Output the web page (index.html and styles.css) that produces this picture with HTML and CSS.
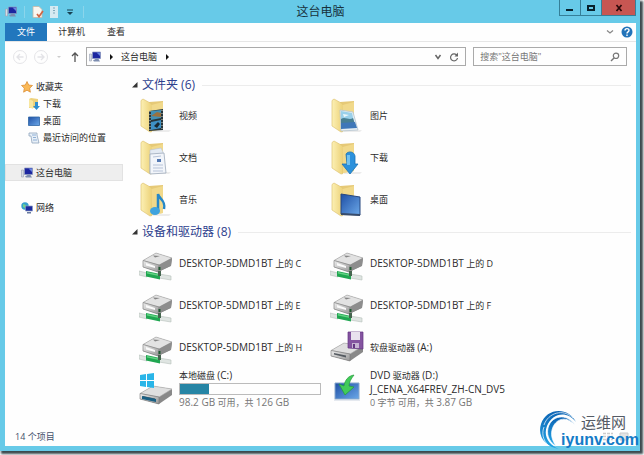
FILE: index.html
```html
<!DOCTYPE html>
<html lang="zh-CN">
<head>
<meta charset="utf-8">
<title>这台电脑</title>
<link rel="stylesheet" href="styles.css">
</head>
<body>
<svg class="defs" aria-hidden="true">
  <defs>
    <linearGradient id="fold" x1="0" x2="1"><stop offset="0" stop-color="#fcf0b4"/><stop offset="1" stop-color="#ecd177"/></linearGradient>
    <linearGradient id="metal" x1="0" y1="0" x2="1" y2="1"><stop offset="0" stop-color="#ededed"/><stop offset="1" stop-color="#979797"/></linearGradient>
    <linearGradient id="blue" x1="0" y1="0" x2="1" y2="1"><stop offset="0" stop-color="#1e4fa5"/><stop offset="1" stop-color="#6ca8e8"/></linearGradient>
    <linearGradient id="swirl" x1="0" y1="0" x2="0" y2="1"><stop offset="0" stop-color="#0c63b4"/><stop offset="1" stop-color="#25a9e8"/></linearGradient>
  </defs>
  <symbol id="pc" viewBox="0 0 12 12">
    <path d="M0.5 3h2v7h-2z" fill="#d7dce6" stroke="#9aa3b4" stroke-width=".6"/>
    <path d="M3.5 1h8v6.500h-8z" fill="#1c26a0" stroke="#8a96bd" stroke-width=".7"/>
    <path d="M7.500 1.500h3.500v3.500z" fill="#6a86e0"/>
    <path d="M4 9.500 6.500 8h3l1.500 2.500H5z" fill="#7d8db0"/>
  </symbol>
  <symbol id="folder" viewBox="0 0 34 36">
    <path d="M14 34h16l2-2H14z" fill="#ececec"/>
    <path d="M10 4l14-1v28l-12 2z" fill="#e6c977"/>
    <path d="M2 2.500 4 1l9 5v27.500l-2 .5-9-6z" fill="url(#fold)" stroke="#dfc474" stroke-width=".7"/>
    <path d="M12.500 7 24 4v27l-11 2z" fill="#f1d98b"/>
  </symbol>
  <symbol id="netdrive" viewBox="0 -6 34 36">
    <path d="M4 9.500 17 2l16 5-1 8-13 6L4 16z" fill="#858585"/>
    <path d="M4 9.500 17 2l16 5-13 7z" fill="#e2e2e2" stroke="#aaa" stroke-width=".6"/>
    <path d="M4 9.500 20 14l-1 7L4 16z" fill="url(#metal)" stroke="#888" stroke-width=".7"/>
    <path d="M20 14 33 7l-1 7.500L19 21z" fill="#8d8d8d"/>
    <path d="M7 12l9 3v2l-9-2.500z" fill="#fafafa"/>
    <path d="M14 4.500 21 5l-5 1.500z" fill="#858585"/>
    <path d="M19.500 16h2v3h-2z" fill="#205a32"/>
    <path d="M0 20l8 2v4l-8-2zM20 23l12 2v4l-12-2z" fill="#dfe5e2" stroke="#b5bfba" stroke-width=".6"/>
    <path d="M7 20 21 23v5.500L7 25.500z" fill="#20a651"/>
    <path d="M8 21l12 2.500V25L8 22.500z" fill="#62d383"/>
    <path d="M19 20h3v5h-3z" fill="#45664f"/>
  </symbol>
  <symbol id="drivebody" viewBox="0 0 34 22">
    <path d="M1 9.500 14 2l19 3v6L20 20 1 15z" fill="#898989"/>
    <path d="M1 9.500 14 2l19 3-13 8z" fill="#dfdfdf" stroke="#aaa" stroke-width=".6"/>
    <path d="M1 9.500 20 13v7L1 15z" fill="url(#metal)" stroke="#777" stroke-width=".6"/>
    <path d="M4 12l12 2.500v2L4 13.500z" fill="#555b61"/>
  </symbol>
</svg>

<div class="window">
  <header class="titlebar">
    <div class="quick">
      <svg class="i12"><use href="#pc"/></svg>
      <span class="bar"></span>
      <svg class="i12" viewBox="0 0 12 12"><path d="M1 .500h6l3 3v8H1z" fill="#fbf6ef" stroke="#c7b7a6" stroke-width=".8"/><path d="M5 8l2 2.500L11 5" fill="none" stroke="#cf6545" stroke-width="1.700"/></svg>
      <svg class="i12" viewBox="0 0 12 12"><path d="M2 0h8v12H2z" fill="#d5eaf2"/><path d="M5 2h2M5 4.500h2M5 7h2" stroke="#7fa8ba"/></svg>
      <svg class="i12" viewBox="0 0 12 12"><path d="M3 4h6" stroke="#174153"/><path d="M3 6h6L6 9z" fill="#174153"/></svg>
      <span class="bar"></span>
    </div>
    <h1>这台电脑</h1>
    <div class="controls">
      <button type="button" aria-label="最小化"><svg class="i10" viewBox="0 0 10 10"><path d="M1 7h7" stroke="#08212c" stroke-width="2"/></svg></button>
      <button type="button" aria-label="最大化"><svg class="i10" viewBox="0 0 10 10"><path d="M2 3h6v4H2z" fill="none" stroke="#08212c" stroke-width="2"/></svg></button>
      <button type="button" class="close" aria-label="关闭"><svg class="i10" viewBox="0 0 10 10"><path d="M2.500 2l5 6m0-6-5 6" stroke="#2b0909" stroke-width="1.700"/></svg></button>
    </div>
  </header>

  <div class="client">
    <nav class="ribbon">
      <button type="button" class="tab file">文件</button>
      <button type="button" class="tab">计算机</button>
      <button type="button" class="tab">查看</button>
      <button type="button" class="tool push" aria-label="展开功能区"><svg class="i10" viewBox="0 0 10 10"><path d="M2 3.500 5 6l3-2.500" fill="none" stroke="#888" stroke-width="1.300"/></svg></button>
      <button type="button" class="tool" aria-label="帮助"><svg class="i12" viewBox="0 0 12 12"><circle cx="6" cy="6" r="5.500" fill="#2273b9"/><path d="M4 4.500C4 2 8 2 8 4.300 8 6 6 5.700 6 7.500M6 8.500v1.500" fill="none" stroke="#fff" stroke-width="1.400"/></svg></button>
    </nav>

    <div class="navbar">
      <div class="history">
        <button type="button" class="tool" aria-label="后退"><svg class="i16" viewBox="0 0 16 16"><circle cx="8" cy="8" r="6.500" fill="none" stroke="#e5e5e8"/><path d="M11.500 8H5m3-3L5 8l3 3" fill="none" stroke="#e3e3e7" stroke-width="1.300"/></svg></button>
        <button type="button" class="tool" aria-label="前进"><svg class="i16" viewBox="0 0 16 16"><circle cx="8" cy="8" r="6.500" fill="none" stroke="#e5e5e8"/><path d="M4.500 8H11M8 5l3 3-3 3" fill="none" stroke="#e3e3e7" stroke-width="1.300"/></svg></button>
        <svg class="i10" viewBox="0 0 10 10"><path d="M3 4h4L5 6z" fill="#ccc"/></svg>
        <button type="button" class="tool" aria-label="向上"><svg class="i12" viewBox="0 0 12 12"><path d="M6 11V2M3 5l3-3 3 3" fill="none" stroke="#555" stroke-width="1.300"/></svg></button>
      </div>
      <div class="address">
        <svg class="i12"><use href="#pc"/></svg>
        <svg class="i8" viewBox="0 0 8 8"><path d="M3 1l3 3-3 3z" fill="#111"/></svg>
        <a href="#" class="crumb">这台电脑</a>
        <svg class="i8" viewBox="0 0 8 8"><path d="M3 1l3 3-3 3z" fill="#111"/></svg>
        <button type="button" class="tool push" aria-label="历史记录"><svg class="i10" viewBox="0 0 10 10"><path d="M2.500 3 5 6.500 7.500 3" fill="none" stroke="#666" stroke-width="1.500"/></svg></button>
        <button type="button" class="tool" aria-label="刷新"><svg class="i10" viewBox="0 0 10 10"><path d="M8 3.500A3.500 3.500 0 1 0 8.500 6" fill="none" stroke="#666" stroke-width="1.200"/><path d="M9 .500v4H5.500z" fill="#666"/></svg></button>
      </div>
      <div class="search">
        <input type="search" aria-label="搜索" placeholder='搜索"这台电脑"'>
        <svg class="i10" viewBox="0 0 10 10"><circle cx="6" cy="3.800" r="2.700" fill="none" stroke="#777" stroke-width="1.200"/><path d="M4 6 1 9" stroke="#777" stroke-width="1.500"/></svg>
      </div>
    </div>

    <div class="body">
      <aside class="side">
        <a href="#" class="node"><svg class="i12" viewBox="0 0 12 12"><path d="M6 .500 7.700 4l3.800.500-2.800 2.700.700 4L6 9.200l-3.400 2 .7-4L.5 4.500 4.300 4z" fill="#fab957" stroke="#d8862b" stroke-width=".7"/></svg>收藏夹</a>
        <a href="#" class="node sub"><svg class="i12" viewBox="0 0 12 12"><path d="M1 1l2-1 7 1v9H1z" fill="#eed27c"/><path d="M1 1l4 2v8L1 9z" fill="#f8e7a0"/><path d="M7 4h3v4h2l-3.500 4L5 8h2z" fill="#2e8ed0"/></svg>下载</a>
        <a href="#" class="node sub"><svg class="i12" viewBox="0 0 12 12"><path d="M.5 2h11v8.500H.5z" fill="url(#blue)" stroke="#2e66a5" stroke-width=".8"/></svg>桌面</a>
        <a href="#" class="node sub"><svg class="i12" viewBox="0 0 12 12"><path d="M1 1h8v2l2 8H4L3 4H1z" fill="#e8f0f8" stroke="#91a4bd" stroke-width=".8"/><path d="M4 3h4M5 5.500h3M5 8h4" stroke="#78a0cb" stroke-width=".8"/></svg>最近访问的位置</a>
        <a href="#" class="node root current"><svg class="i12"><use href="#pc"/></svg>这台电脑</a>
        <a href="#" class="node root"><svg class="i12" viewBox="0 0 12 12"><circle cx="4" cy="4" r="3.700" fill="#35a0cd"/><path d="M2 2l3 1-1 3-2-1z" fill="#72d08d"/><path d="M4.500 4h7v5h-7z" fill="#1b2ba0" stroke="#8e9bc0" stroke-width=".7"/><path d="M6 10h4v1.500H6z" fill="#67799e"/></svg>网络</a>
      </aside>

      <main class="files">
        <section>
          <h2><svg class="i8" viewBox="0 0 8 8"><path d="M6.500 1v5.500H1z" fill="#333"/></svg>文件夹 (6)</h2>
          <div class="grid">
            <a href="#" class="item"><svg class="big" viewBox="0 0 34 36"><use href="#folder"/><path d="M10 13l14-2v21l-14 1z" fill="#27353a"/><path d="M12 13l10-1v8l-10 2z" fill="#418fb5"/><path d="M12 24l10-2v8l-10 2z" fill="#3e91c4"/><path d="M12 18l6-4 4 1v4z" fill="#9b713e"/><path d="M15 28l4-4 2 2-3 4z" fill="#1a2930"/><path d="M11 13v19M23 12v19" stroke="#c8d0c8" stroke-dasharray="1 2"/></svg><span>视频</span></a>
            <a href="#" class="item"><svg class="big" viewBox="0 0 34 36"><use href="#folder"/><path d="M10 12l13 2 5 18-17 1z" fill="#e6eff4" stroke="#b5c4cf" stroke-width=".8"/><path d="M11 13l11 2 2 9-13-1z" fill="#9ad0ea"/><path d="M11 21c4-3 8 2 12-1l2 6-14 1z" fill="#477f93"/><path d="M11 25l14-1 2 6-16 1z" fill="#3e77b8"/><path d="M13 16l6 1-5 2z" fill="#eef8fb"/></svg><span>图片</span></a>
            <a href="#" class="item"><svg class="big" viewBox="0 0 34 36"><use href="#folder"/><path d="M11 10l11-2 2 4v20l-13 1z" fill="#e3eaf3" stroke="#b8c3d0" stroke-width=".6"/><path d="M11 14l14-1 2 20-16 1z" fill="#f2f5fa" stroke="#9daaba" stroke-width=".8"/><path d="M14 17l8-1M14 25h10M14 28h10M14 31h10" stroke="#b7c3d8"/><path d="M18 19h4v3h-4z" fill="#5479b3"/></svg><span>文档</span></a>
            <a href="#" class="item"><svg class="big" viewBox="0 0 34 36"><use href="#folder"/><path d="M16 14c2-3 8-3 9 2v8h3l-8 10-8-10h5z" fill="#2c91dc" stroke="#1972b5" stroke-width=".8"/><path d="M17 15h3v10h-3z" fill="#72c2f1"/></svg><span>下载</span></a>
            <a href="#" class="item"><svg class="big" viewBox="0 0 34 36"><use href="#folder"/><path d="M19 29V12c1 5 8 6 6 15" fill="none" stroke="#2688c7" stroke-width="2.500"/><ellipse cx="16" cy="29" rx="5" ry="4" fill="#3fa3df"/></svg><span>音乐</span></a>
            <a href="#" class="item"><svg class="big" viewBox="0 0 34 36"><use href="#folder"/><path d="M11 12l19 3v18l-19-1z" fill="url(#blue)" stroke="#27477e"/><path d="M11 31l19 1v2l-19-1z" fill="#384c6c"/></svg><span>桌面</span></a>
          </div>
        </section>
        <section>
          <h2><svg class="i8" viewBox="0 0 8 8"><path d="M6.500 1v5.500H1z" fill="#333"/></svg>设备和驱动器 (8)</h2>
          <div class="grid">
            <a href="#" class="item"><svg class="big"><use href="#netdrive"/></svg><span><span class="label">DESKTOP-5DMD1BT</span> 上的 C</span></a>
            <a href="#" class="item"><svg class="big"><use href="#netdrive"/></svg><span><span class="label">DESKTOP-5DMD1BT</span> 上的 D</span></a>
            <a href="#" class="item"><svg class="big"><use href="#netdrive"/></svg><span><span class="label">DESKTOP-5DMD1BT</span> 上的 E</span></a>
            <a href="#" class="item"><svg class="big"><use href="#netdrive"/></svg><span><span class="label">DESKTOP-5DMD1BT</span> 上的 F</span></a>
            <a href="#" class="item"><svg class="big"><use href="#netdrive"/></svg><span><span class="label">DESKTOP-5DMD1BT</span> 上的 H</span></a>
            <a href="#" class="item"><svg class="big" viewBox="0 0 34 36"><use href="#drivebody" y="12" width="34" height="22"/><path d="M18 3h15v17l-15-1z" fill="#8454a0" stroke="#633581" stroke-width=".7"/><path d="M21 3h9v8h-9z" fill="#e9e2ee"/><path d="M22 14h7v5h-7z" fill="#c6b3d3"/><path d="M23 15h2v4h-2z" fill="#633581"/></svg><span>软盘驱动器 <span class="label">(A:)</span></span></a>
            <a href="#" class="item"><svg class="big" viewBox="0 0 34 36"><use href="#drivebody" y="13" width="34" height="22"/><path d="M3 25l14 3v3L3 28z" fill="#195f83"/><path d="M1 4l6-1v6H1zM8 3l7-1v7H8zM1 10h6v6l-6-1zM8 10h7v7l-7-1z" fill="#29b5e8"/></svg>
              <span class="info"><span>本地磁盘 <span class="label">(C:)</span></span><span class="meter"><span class="used"></span></span><span class="sub-text"><span class="label">98.2 GB</span> 可用，共 <span class="label">126 GB</span></span></span></a>
            <a href="#" class="item"><svg class="big" viewBox="0 0 34 36"><path d="M5 12h24v16H5z" fill="url(#blue)" stroke="#89a8cb"/><path d="M4 29h26" stroke="#cbd4df"/><path d="M24 4C18 5 15 9 14 15l-5-2 6 11 9-8-5-1c0-4 2-7 5-11z" fill="#42cb59" stroke="#249b3b" stroke-width=".7"/></svg>
              <span class="info"><span><span class="label">DVD</span> 驱动器 <span class="label">(D:)</span></span><span class="label">J_CENA_X64FREV_ZH-CN_DV5</span><span class="sub-text">0 字节 可用，共 <span class="label">3.87 GB</span></span></span></a>
          </div>
        </section>
      </main>
    </div>
    <footer class="status">
      <span>14 个项目</span>
      <button type="button" class="tool push" aria-label="详细信息"><svg class="i10" viewBox="0 0 10 10"><path d="M0 1.500h10M0 4.500h10M0 7.500h10" stroke="#ccc" stroke-width="1.500" stroke-dasharray="3 1"/></svg></button>
      <button type="button" class="tool" aria-label="大图标"><svg class="i10" viewBox="0 0 10 10"><path d="M1 1h8v7H1z" fill="#e4e4e4" stroke="#ccc"/></svg></button>
    </footer>
  </div>
</div>

<div class="watermark">
  <svg class="swirl" viewBox="0 0 40 42"><path d="M37 13C29-3 7-1 2 15c-4 13 5 23 18 25C10 36 4 27 8 17 13 4 28 1 37 13z" fill="url(#swirl)"/><path d="M36 16C27 3 12 7 9 19c-2 9 3 15 8 18-4-6-6-12-3-19C18 9 28 7 36 16z" fill="url(#swirl)" stroke="#fff" stroke-width=".7"/><path d="M5 16C9 4 24-1 34 9M10 37C3 31 3 23 5 18" fill="none" stroke="#fff" stroke-width=".7"/></svg>
  <div class="brand"><span class="brand-cn">运维网</span><span class="brand-url">iyunv.com</span></div>
</div>
</body>
</html>
```
FILE: styles.css
```css
* { box-sizing: border-box; }

body {
  display: flex;
  height: 100vh;
  margin: 0;
  padding: 0 4px 4px 0;
  overflow: hidden;
  background: #fff;
  color: #2b2b2b;
  font: 9px/12px "Open Sans", "Noto Sans CJK SC", sans-serif;
}

h1, h2 { margin: 0; font-weight: 400; }
a { color: inherit; text-decoration: none; }
svg { display: block; flex: none; }
button {
  margin: 0;
  padding: 0;
  border: 0;
  background: none;
  color: inherit;
  font: inherit;
}

.defs { position: absolute; width: 0; height: 0; }
.i8 { width: 8px; height: 8px; }
.i10 { width: 10px; height: 10px; }
.i12 { width: 12px; height: 12px; }
.i16 { width: 16px; height: 16px; }
.push { margin-left: auto; }

.window {
  display: flex;
  flex: 1;
  flex-direction: column;
  padding: 0 4px 5px 5px;
  background: #67cae8;
  box-shadow: 2px 2px 2px 1px #3c4a4f;
}

.titlebar {
  display: grid;
  grid-template-columns: 1fr auto 1fr;
  height: 23px;
}
.quick { display: flex; align-items: center; gap: 4px; }
.quick .bar { width: 1px; height: 12px; margin: 0 3px; background: #8bd5eb; }
.titlebar h1 { align-self: center; color: #17323c; font-size: 12px; line-height: 16px; }
.controls { display: flex; justify-self: end; align-items: flex-start; }
.controls button {
  display: grid;
  place-items: center;
  width: 21px;
  height: 16px;
  border: solid #357f98;
  border-width: 0 0 1px 1px;
}
.controls .close { width: 35px; border-right-width: 1px; background: #c75652; }

.client { display: flex; flex: 1; flex-direction: column; background: #fefefe; }

.ribbon {
  display: flex;
  align-items: center;
  height: 19px;
  padding-right: 3px;
  gap: 6px;
  border-bottom: 1px solid #e6e6e6;
}
.tab { padding: 0 5px; }
.tab.file { align-self: stretch; width: 42px; background: #2277bd; color: #fff; }
.tab:not(.file) + .tab { margin-left: 6px; }

.navbar { display: flex; align-items: center; padding: 5px 9px 2px 7px; gap: 7px; }
.history { display: flex; align-items: center; gap: 6px; width: 67px; }
.history .i10, .history .i16 { margin-right: -1px; }
.address, .search {
  display: flex;
  align-items: center;
  height: 19px;
  border: 1px solid #aaa;
}
.address { flex: 5; padding: 0 5px 0 2px; gap: 6px; }
.address .tool { margin-right: 1px; }
.address .push { margin-left: auto; margin-right: 0; }
.search { width: 25%; padding: 0 6px; }
.search input {
  flex: 1;
  min-width: 0;
  padding: 0;
  border: 0;
  outline: 0;
  background: none;
  font: inherit;
}
.search input::placeholder { color: #777; opacity: 1; }

.body { display: flex; flex: 1; }
.side { flex: none; width: 118px; padding-top: 10px; }
.node {
  display: flex;
  align-items: center;
  height: 17px;
  padding-left: 15px;
  gap: 3px;
  border: 1px solid transparent;
  white-space: nowrap;
}
.node.sub { padding-left: 22px; }
.node.root { margin-top: 18px; }
.node.current { background: #eee; border-color: #e2e2e2; }

.files { flex: 1; padding: 9px 5px 0 8px; }
.files h2 {
  display: flex;
  align-items: center;
  height: 16px;
  gap: 3px;
  color: #2d408d;
  font-size: 12px;
  line-height: 16px;
}
.files h2::after { flex: 1; height: 1px; margin-left: 4px; background: #ececec; content: ""; }
.grid {
  display: grid;
  grid-template-columns: 191px minmax(0, 1fr);
  grid-auto-rows: 42px;
  padding: 2px 0 3px 8px;
}
.item { display: flex; align-items: center; gap: 6px; min-width: 0; }
.item .big { width: 34px; height: 36px; }
.info { display: flex; flex-direction: column; gap: 1px; }
.label { font-size: 10px; }
.sub-text { color: #777; }
.meter { width: 142px; height: 12px; border: 1px solid #bbb; }
.used { display: block; width: 21%; height: 100%; background: #2685a5; }

.status { display: flex; align-items: center; gap: 6px; padding: 0 7px 3px 10px; color: #43506b; }

.watermark { position: absolute; right: 5px; bottom: 4px; display: flex; }
.swirl { width: 40px; height: 42px; }
.brand { display: flex; flex-direction: column; margin: 4px 0 0 -18px; }
.brand-cn { padding-left: 20px; color: #555b65; font-size: 15px; line-height: 18px; }
.brand-url { color: #137bc7; font: bold 16px/18px "Liberation Sans", sans-serif; }
```
